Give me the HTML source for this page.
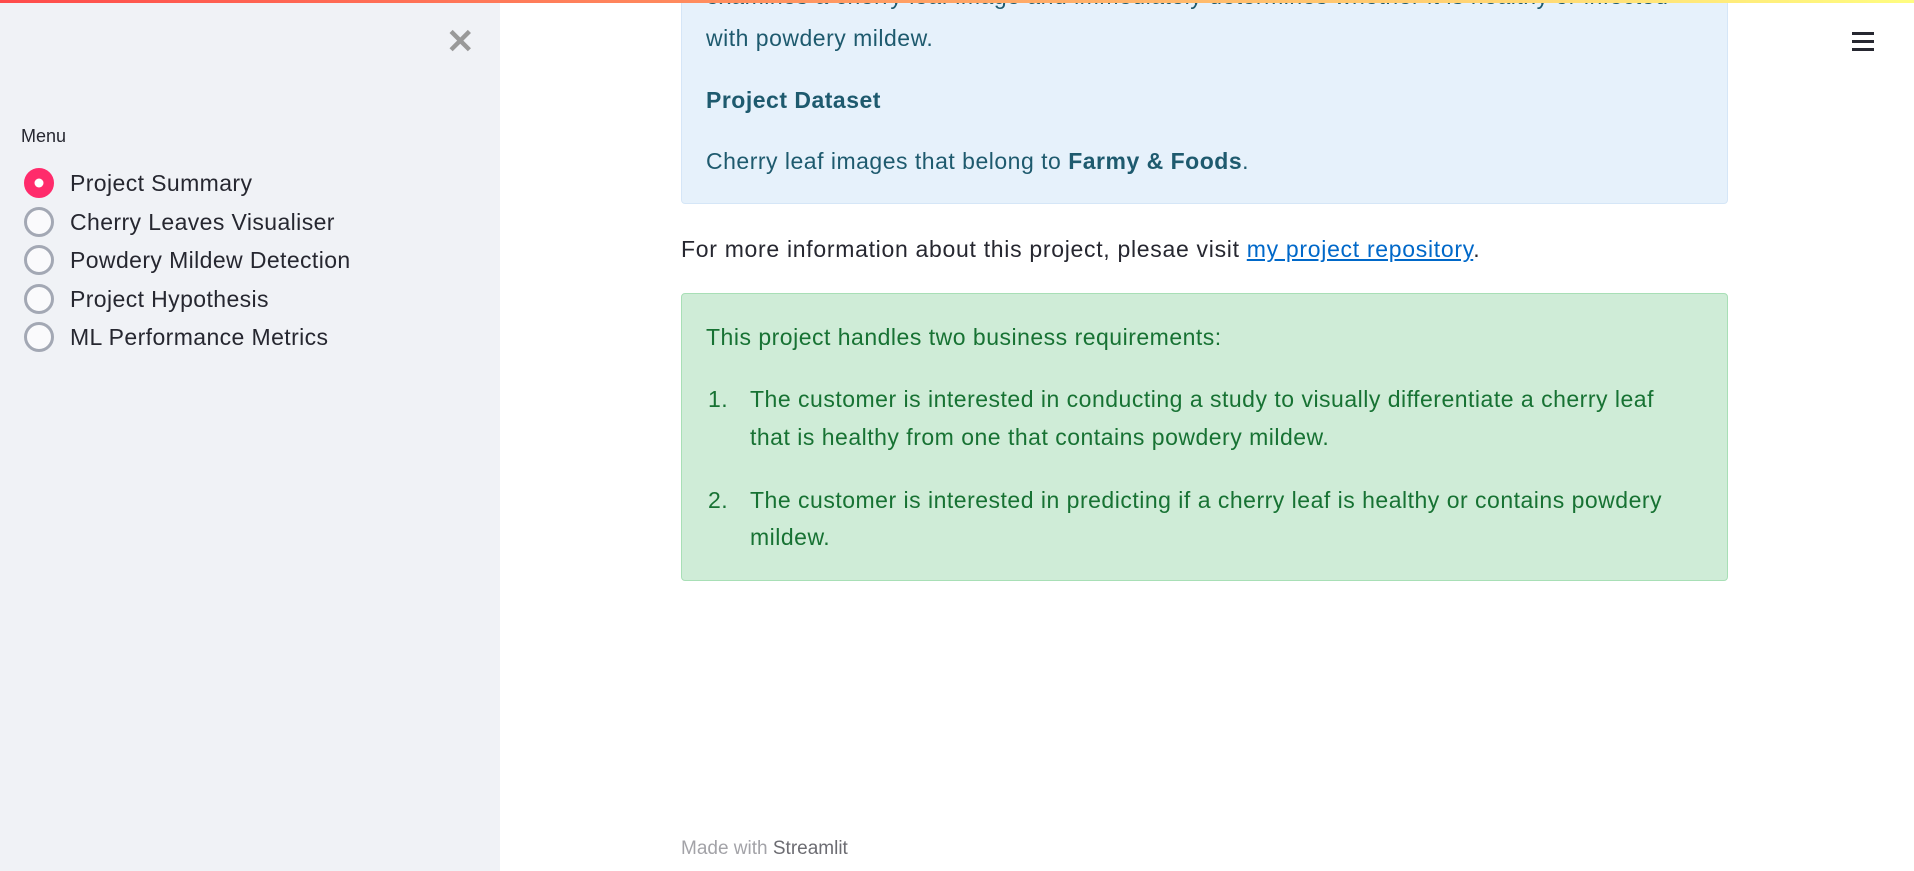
<!DOCTYPE html>
<html><head><meta charset="utf-8"><style>
*{margin:0;padding:0;box-sizing:border-box}
body{width:1914px;height:871px;overflow:hidden;background:#fff;font-family:"Liberation Sans",sans-serif;position:relative;color:#262730}
.top{position:absolute;left:0;top:0;width:1914px;height:3px;background:linear-gradient(90deg,#ff4b4b,#fffd80);z-index:5}
.side{position:absolute;left:0;top:0;width:500px;height:871px;background:#f0f2f6}
.x{position:absolute;left:446px;top:22px;font-size:34px;color:#999;font-weight:bold}
.menu{position:absolute;left:21px;top:126px;font-size:18px;color:#262730}
.r{position:absolute;left:24px;width:30px;height:30px;border-radius:50%;border:3px solid #a3a8b4;background:#fafafc}
.r.on{background:#ff2b6b;border-color:#ff2b6b}
.r.on::after{content:"";position:absolute;left:6px;top:6px;width:12px;height:12px;border-radius:50%;background:#fff;transform:scale(.75)}
.lab{position:absolute;left:70px;font-size:23px;letter-spacing:0.4px;color:#262730;line-height:30px}
.box{position:absolute;left:681px;width:1047px;border-radius:4px}
.blue{top:-20px;height:224px;background:#e6f1fb;border:1px solid #d5e6f7;color:#1e5a6e}
.green{top:293px;height:288px;background:#cfecd7;border:1px solid #a8dfb6;color:#177233}
.t{position:absolute;font-size:23px;letter-spacing:0.5px;line-height:30px;white-space:nowrap}
.ham{position:absolute;left:1852px;width:22px;height:3px;background:#262730}
</style></head><body>
<div class="top"></div>
<div class="side">
<div class="x">✕</div>
<div class="menu">Menu</div>
<div class="r on" style="top:168px"></div><div class="lab" style="top:168px">Project Summary</div>
<div class="r" style="top:207px"></div><div class="lab" style="top:207px">Cherry Leaves Visualiser</div>
<div class="r" style="top:245px"></div><div class="lab" style="top:245px">Powdery Mildew Detection</div>
<div class="r" style="top:284px"></div><div class="lab" style="top:284px">Project Hypothesis</div>
<div class="r" style="top:322px"></div><div class="lab" style="top:322px">ML Performance Metrics</div>
</div>
<div class="ham" style="top:32px"></div><div class="ham" style="top:40px"></div><div class="ham" style="top:48px"></div>
<div class="box blue"></div>
<div class="t" style="left:706px;top:-19px;color:#1e5a6e">examines a cherry leaf image and immediately determines whether it is healthy or infected</div>
<div class="t" style="left:706px;top:23px;color:#1e5a6e">with powdery mildew.</div>
<div class="t" style="left:706px;top:85px;color:#1e5a6e;font-weight:bold">Project Dataset</div>
<div class="t" style="left:706px;top:146px;color:#1e5a6e">Cherry leaf images that belong to <b>Farmy &amp; Foods</b>.</div>
<div class="t" style="left:681px;top:234px;color:#262730;letter-spacing:0.7px">For more information about this project, plesae visit <span style="color:#0068c9;text-decoration:underline">my project repository</span>.</div>
<div class="box green"></div>
<div class="t" style="left:706px;top:322px;color:#177233">This project handles two business requirements:</div>
<div class="t" style="left:708px;top:384px;color:#177233">1.</div>
<div class="t" style="left:750px;top:384px;color:#177233">The customer is interested in conducting a study to visually differentiate a cherry leaf</div>
<div class="t" style="left:750px;top:422px;color:#177233">that is healthy from one that contains powdery mildew.</div>
<div class="t" style="left:708px;top:485px;color:#177233">2.</div>
<div class="t" style="left:750px;top:485px;color:#177233">The customer is interested in predicting if a cherry leaf is healthy or contains powdery</div>
<div class="t" style="left:750px;top:522px;color:#177233">mildew.</div>
<div style="position:absolute;left:681px;top:838px;font-size:19px;color:#a3a3a8">Made with <span style="color:#6c6c72">Streamlit</span></div>
</body></html>
